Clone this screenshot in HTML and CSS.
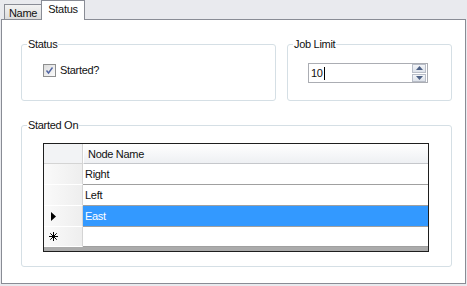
FILE: index.html
```html
<!DOCTYPE html>
<html lang="en">
<head>
    <meta charset="UTF-8">
    <title>Job Settings</title>
    <link rel="stylesheet" href="styles.css">
</head>
<body>
<div class="window">
    <div class="tabs">
        <div class="tab">Name</div>
        <div class="tab active">Status</div>
    </div>
    <div class="page">
        <div class="top-row">
            <fieldset class="group status-group">
                <legend>Status</legend>
                <label class="check">
                    <span class="box">
                        <svg width="11" height="11" viewBox="0 0 11 11">
                            <path d="M2.5 5.5 L4.5 8 L8.5 2.5" fill="none" stroke="#5266a3" stroke-width="1.4"/>
                        </svg>
                    </span>
                    Started?
                </label>
            </fieldset>
            <fieldset class="group limit-group">
                <legend>Job Limit</legend>
                <div class="spin">
                    <div class="spin-value">10<span class="caret"></span></div>
                    <div class="spin-btns">
                        <div class="spin-btn">
                            <svg width="7" height="4" viewBox="0 0 7 4"><path d="M0 4 L3.5 0 L7 4 Z" fill="#4d6185"/></svg>
                        </div>
                        <div class="spin-btn">
                            <svg width="7" height="4" viewBox="0 0 7 4"><path d="M0 0 L7 0 L3.5 4 Z" fill="#4d6185"/></svg>
                        </div>
                    </div>
                </div>
            </fieldset>
        </div>
        <fieldset class="group started-group">
            <legend>Started On</legend>
            <div class="grid">
                <div class="grid-row header">
                    <div class="rh"></div>
                    <div class="cell">Node Name</div>
                </div>
                <div class="grid-row">
                    <div class="rh"></div>
                    <div class="cell">Right</div>
                </div>
                <div class="grid-row">
                    <div class="rh"></div>
                    <div class="cell">Left</div>
                </div>
                <div class="grid-row selected">
                    <div class="rh">
                        <svg width="5" height="9" viewBox="0 0 5 9"><path d="M0 0 L5 4.5 L0 9 Z" fill="#000"/></svg>
                    </div>
                    <div class="cell">East</div>
                </div>
                <div class="grid-row new-row">
                    <div class="rh">
                        <svg width="9" height="9" viewBox="0 0 9 9">
                            <path d="M4.5 0 V9 M0 4.5 H9 M1.3 1.3 L7.7 7.7 M7.7 1.3 L1.3 7.7" stroke="#000" stroke-width="1"/>
                        </svg>
                    </div>
                    <div class="cell"></div>
                </div>
            </div>
        </fieldset>
    </div>
</div>
</body>
</html>
```

FILE: styles.css
```css
html, body {
    margin: 0;
    height: 100%;
}
body {
    background: #e4e5e9;
    font-family: "Liberation Sans", Arial, sans-serif;
    font-size: 11px;
    letter-spacing: -0.3px;
    color: #111;
}
.window {
    height: 286px;
    padding: 0 1px 2px 1px;
    box-sizing: border-box;
    display: flex;
    flex-direction: column;
    background: #e9eaee;
}
.tabs {
    height: 19px;
    display: flex;
    align-items: flex-end;
    padding-left: 3px;
}
.tab {
    width: 38px;
    height: 15px;
    box-sizing: border-box;
    border: 1px solid #898c95;
    border-bottom: none;
    background: linear-gradient(#f2f2f2, #dcdcdc);
    text-align: center;
    line-height: 13px;
    padding-top: 2px;
}
.tab.active {
    width: 44px;
    height: 20px;
    margin-left: -1px;
    margin-bottom: -1px;
    background: #fff;
    position: relative;
    z-index: 1;
}
.page {
    flex: 1;
    border: 1px solid #898c95;
    background: #fff;
    padding: 18px 13px 0 19px;
}
.top-row {
    display: flex;
    gap: 11px;
}
.group {
    margin: 0;
    padding: 0;
    border: 1px solid #d5dfe5;
    border-radius: 3px;
    box-sizing: border-box;
    min-width: 0;
}
.group legend {
    padding: 0 1px;
    margin-left: 5px;
    line-height: 13px;
}
.status-group {
    width: 255px;
    height: 63px;
}
.limit-group {
    width: 165px;
    height: 63px;
}
.check {
    display: flex;
    align-items: center;
    gap: 4px;
    margin: 13px 0 0 21px;
    line-height: 13px;
}
.box {
    width: 13px;
    height: 13px;
    box-sizing: border-box;
    border: 1px solid #8e8f8f;
    background: linear-gradient(135deg, #dcdcdc, #fbfbfb);
    display: flex;
    align-items: center;
    justify-content: center;
}
.spin {
    width: 120px;
    height: 20px;
    box-sizing: border-box;
    margin: 12px 0 0 20px;
    border: 1px solid #abadb3;
    display: flex;
}
.spin-value {
    flex: 1;
    padding-left: 2px;
    line-height: 18px;
    display: flex;
    align-items: center;
}
.caret {
    width: 1px;
    height: 13px;
    background: #000;
    margin-left: 1px;
}
.spin-btns {
    width: 14px;
    display: flex;
    flex-direction: column;
    gap: 1px;
    padding: 0 1px 0 0;
}
.spin-btn {
    flex: 1;
    border: 1px solid #b8bdc7;
    background: linear-gradient(#f3f5f8, #dde2ea);
    display: flex;
    align-items: center;
    justify-content: center;
}
.started-group {
    width: 431px;
    height: 148px;
    margin-top: 18px;
}
.grid {
    width: 386px;
    height: 109px;
    box-sizing: border-box;
    margin: 11px 0 0 21px;
    border: 1px solid #1e1e1e;
    background: #ababab;
}
.grid-row {
    display: flex;
    height: 21px;
}
.grid-row.header {
    height: 20px;
}
.grid-row.new-row {
    height: 20px;
}
.rh {
    width: 39px;
    box-sizing: border-box;
    border-right: 1px solid #d4d4d4;
    border-bottom: 1px solid #fff;
    background: linear-gradient(90deg, #fafafa, #eeeeee);
    display: flex;
    align-items: center;
    padding-left: 7px;
}
.new-row .rh {
    padding-left: 5px;
}
.cell {
    flex: 1;
    box-sizing: border-box;
    background: #fff;
    border-bottom: 1px solid #a0a0a0;
    padding-left: 2px;
    display: flex;
    align-items: center;
}
.header .rh {
    background: #f2f3f5;
    border-bottom: 1px solid #d4d4d4;
}
.header .cell {
    background: linear-gradient(#ffffff, #eef0f3);
    border-bottom: 1px solid #c5c7cb;
    border-left: 1px solid #fff;
    padding-left: 4px;
}
.selected .cell {
    background: #3399ff;
    color: #fff;
}
```
